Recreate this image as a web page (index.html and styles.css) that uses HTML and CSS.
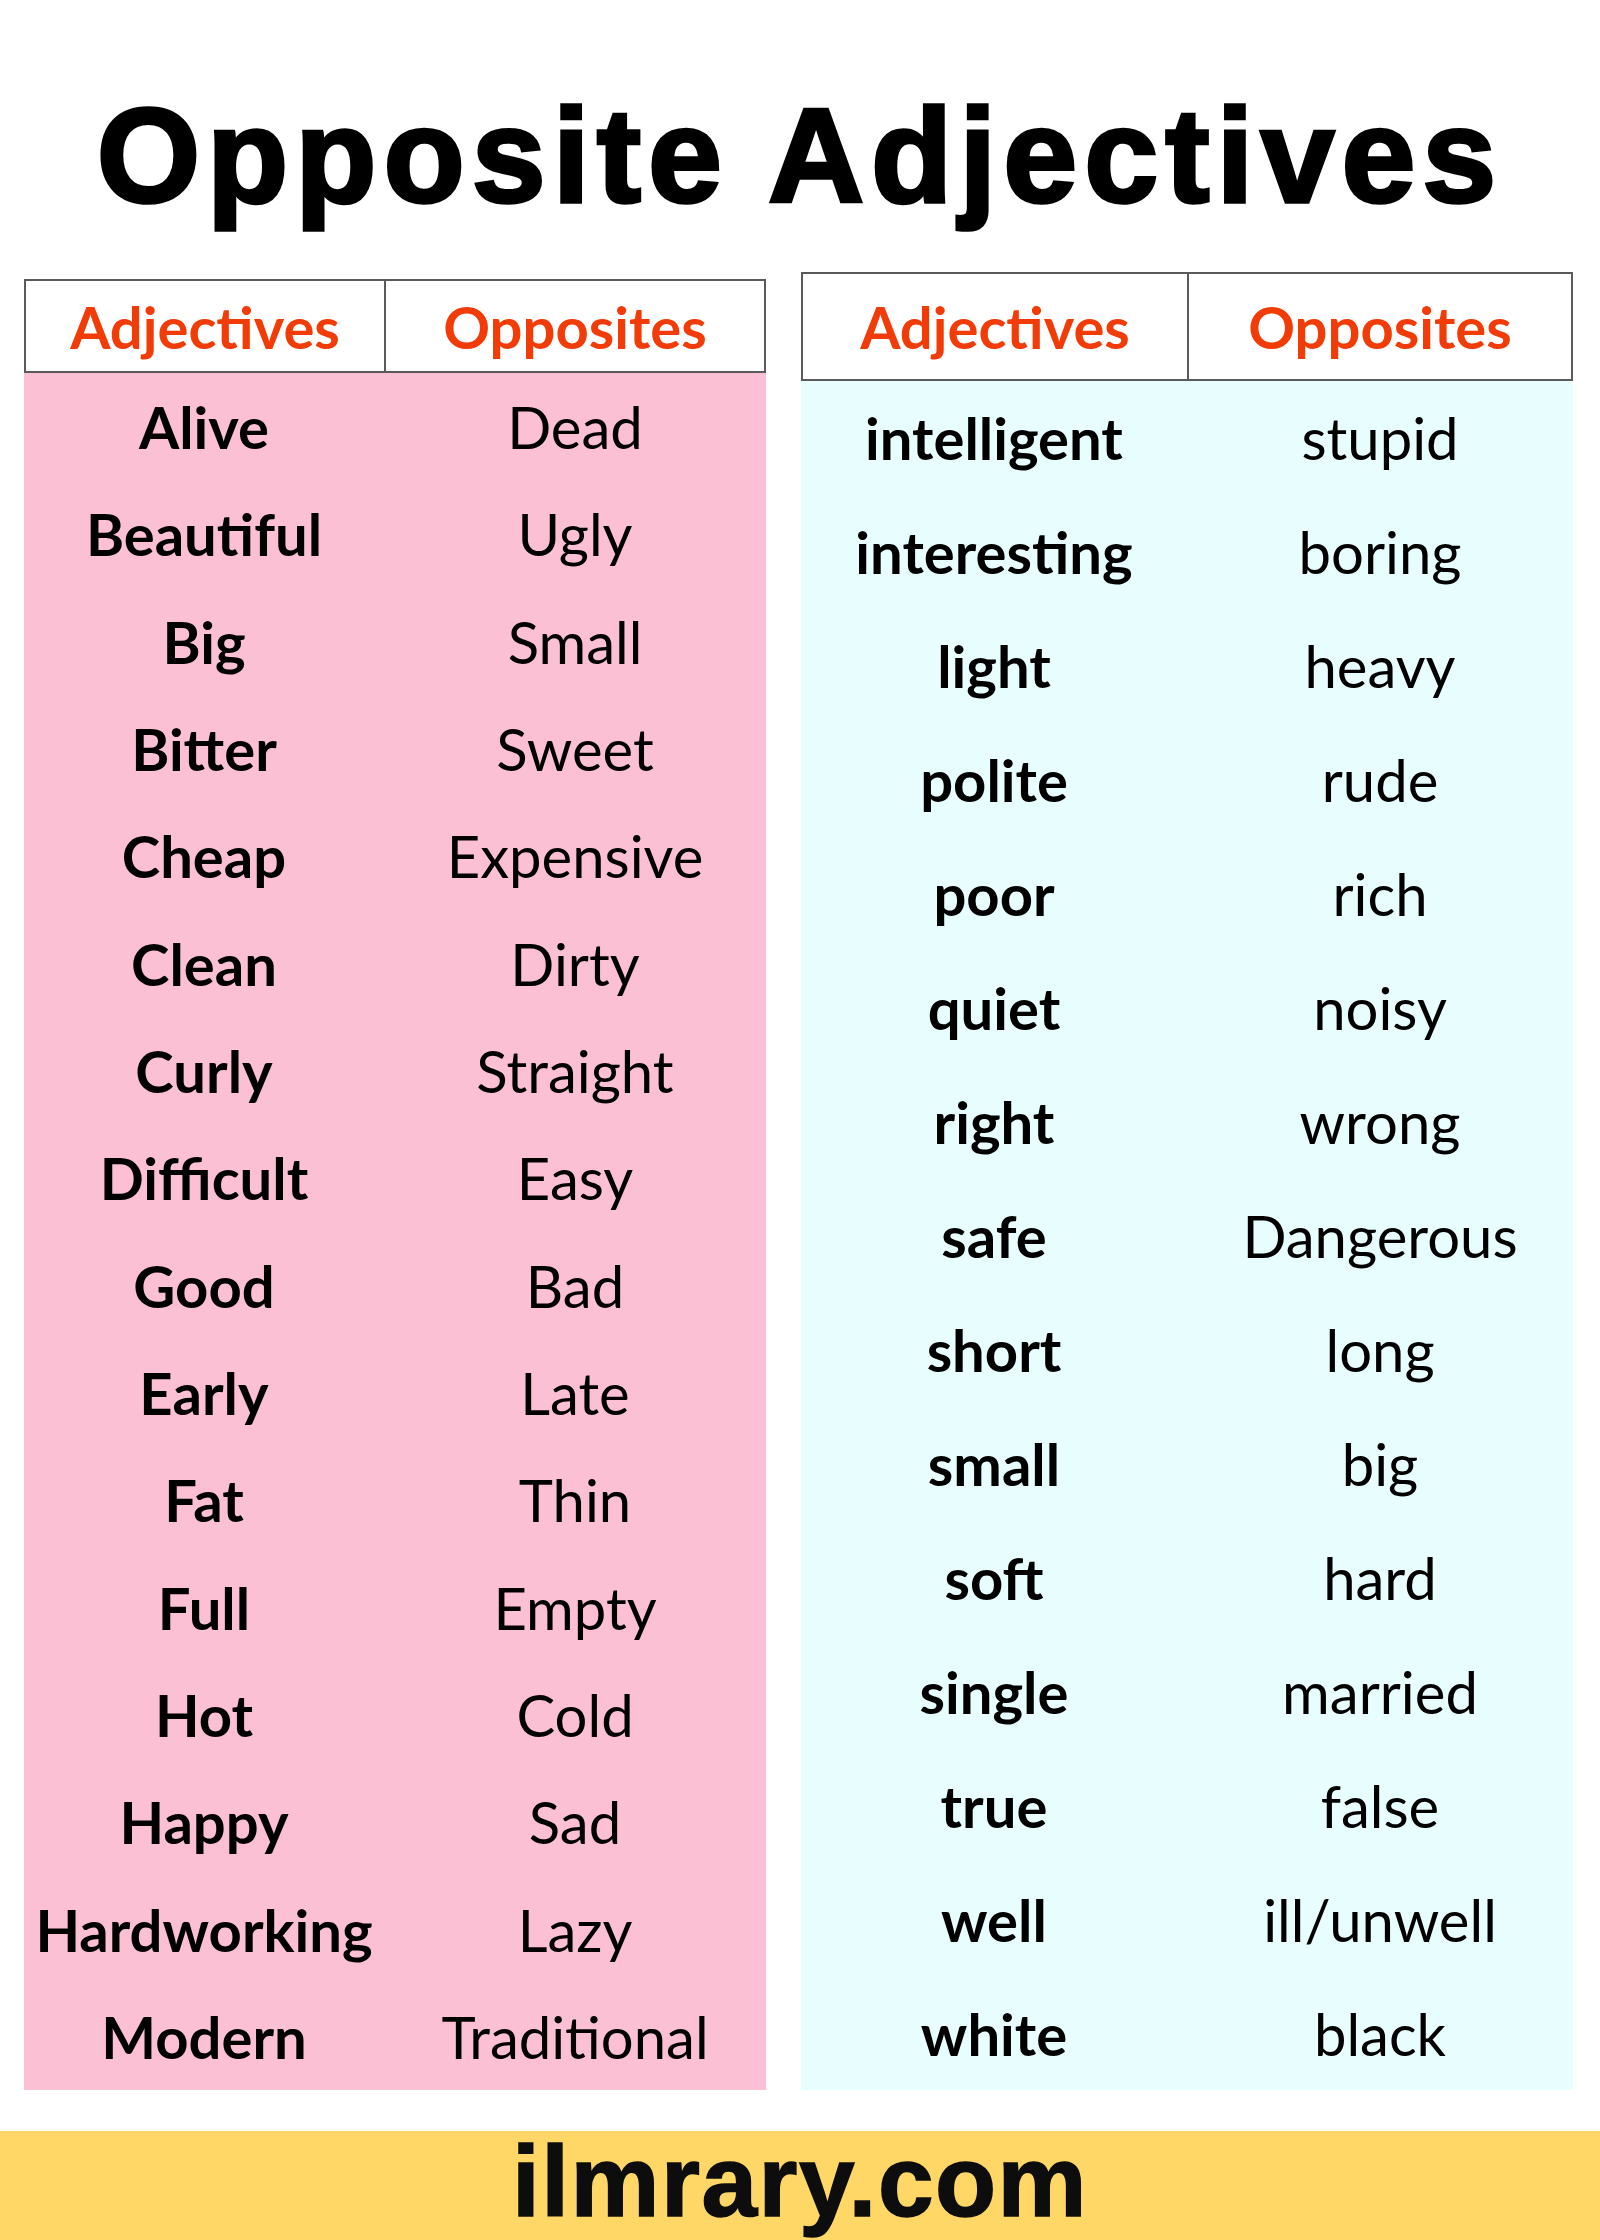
FILE: index.html
```html
<!DOCTYPE html>
<html lang="en">
<head>
<meta charset="utf-8">
<title>Opposite Adjectives</title>
<link rel="stylesheet" href="styles.css">
</head>
<body>
<div class="page">
  <h1 class="title">Opposite Adjectives</h1>
  <div class="tables">
    <div class="table table-left">
      <div class="head">
        <div class="hcell">Adjectives</div>
        <div class="hcell hcell-div">Opposites</div>
      </div>
      <div class="body body-pink">
        <div class="row"><span class="adj">Alive</span><span class="opp">Dead</span></div>
        <div class="row"><span class="adj">Beautiful</span><span class="opp">Ugly</span></div>
        <div class="row"><span class="adj">Big</span><span class="opp">Small</span></div>
        <div class="row"><span class="adj">Bitter</span><span class="opp">Sweet</span></div>
        <div class="row"><span class="adj">Cheap</span><span class="opp">Expensive</span></div>
        <div class="row"><span class="adj">Clean</span><span class="opp">Dirty</span></div>
        <div class="row"><span class="adj">Curly</span><span class="opp">Straight</span></div>
        <div class="row"><span class="adj">Difficult</span><span class="opp">Easy</span></div>
        <div class="row"><span class="adj">Good</span><span class="opp">Bad</span></div>
        <div class="row"><span class="adj">Early</span><span class="opp">Late</span></div>
        <div class="row"><span class="adj">Fat</span><span class="opp">Thin</span></div>
        <div class="row"><span class="adj">Full</span><span class="opp">Empty</span></div>
        <div class="row"><span class="adj">Hot</span><span class="opp">Cold</span></div>
        <div class="row"><span class="adj">Happy</span><span class="opp">Sad</span></div>
        <div class="row"><span class="adj">Hardworking</span><span class="opp">Lazy</span></div>
        <div class="row"><span class="adj">Modern</span><span class="opp">Traditional</span></div>
      </div>
    </div>
    <div class="table table-right">
      <div class="head">
        <div class="hcell">Adjectives</div>
        <div class="hcell hcell-div">Opposites</div>
      </div>
      <div class="body body-cyan">
        <div class="row"><span class="adj">intelligent</span><span class="opp">stupid</span></div>
        <div class="row"><span class="adj">interesting</span><span class="opp">boring</span></div>
        <div class="row"><span class="adj">light</span><span class="opp">heavy</span></div>
        <div class="row"><span class="adj">polite</span><span class="opp">rude</span></div>
        <div class="row"><span class="adj">poor</span><span class="opp">rich</span></div>
        <div class="row"><span class="adj">quiet</span><span class="opp">noisy</span></div>
        <div class="row"><span class="adj">right</span><span class="opp">wrong</span></div>
        <div class="row"><span class="adj">safe</span><span class="opp">Dangerous</span></div>
        <div class="row"><span class="adj">short</span><span class="opp">long</span></div>
        <div class="row"><span class="adj">small</span><span class="opp">big</span></div>
        <div class="row"><span class="adj">soft</span><span class="opp">hard</span></div>
        <div class="row"><span class="adj">single</span><span class="opp">married</span></div>
        <div class="row"><span class="adj">true</span><span class="opp">false</span></div>
        <div class="row"><span class="adj">well</span><span class="opp">ill/unwell</span></div>
        <div class="row"><span class="adj">white</span><span class="opp">black</span></div>
      </div>
    </div>
  </div>
  <div class="footer">ilmrary.com</div>
</div>
</body>
</html>
```

FILE: styles.css
```css
html, body {
  margin: 0;
  padding: 0;
  background: #ffffff;
}
body {
  width: 1600px;
  height: 2240px;
  overflow: hidden;
}
.page {
  display: flex;
  flex-direction: column;
  height: 2240px;
}
.title {
  margin: 0;
  padding: 90px 0 49px;
  height: 133px;
  font-family: "Liberation Sans", Arial, sans-serif;
  font-weight: 700;
  font-size: 133px;
  line-height: 133px;
  letter-spacing: 7px;
  text-align: center;
  color: #000;
  -webkit-text-stroke: 3.5px #000;
  white-space: nowrap;
}
.tables {
  display: flex;
  padding-left: 24px;
  gap: 35px;
  height: 1818px;
}
.table {
  display: flex;
  flex-direction: column;
}
.table-left {
  width: 742px;
  margin-top: 7px;
}
.table-right {
  width: 772px;
}
.head {
  display: grid;
  border: 2px solid #5a5a5a;
  background: #fff;
  box-sizing: border-box;
}
.table-left .head {
  grid-template-columns: 358px 1fr;
  height: 94px;
}
.table-right .head {
  grid-template-columns: 384px 1fr;
  height: 109px;
}
.hcell {
  display: flex;
  align-items: center;
  justify-content: center;
  font-family: Lato, "Open Sans", sans-serif;
  font-weight: 700;
  font-size: 58px;
  color: #f23c08;
}
.hcell-div {
  border-left: 2px solid #5a5a5a;
}
.body {
  flex: 1;
  display: flex;
  flex-direction: column;
}
.body-pink {
  background: #fcc0d5;
}
.body-cyan {
  background: #e8fdfd;
}
.row {
  flex: 1;
  display: grid;
  align-items: center;
  font-family: Lato, "Open Sans", sans-serif;
  font-size: 58px;
  color: #000;
}
.table-left .row {
  grid-template-columns: 360px 1fr;
}
.table-right .row {
  grid-template-columns: 386px 1fr;
}
.adj {
  font-weight: 700;
  text-align: center;
}
.opp {
  font-weight: 400;
  text-align: center;
}
.footer {
  margin-top: 41px;
  height: 109px;
  box-sizing: border-box;
  background: #fed766;
  font-family: "Liberation Sans", Arial, sans-serif;
  font-weight: 700;
  font-size: 100px;
  line-height: 100px;
  letter-spacing: 1.5px;
  text-align: center;
  color: #0d0d0d;
  -webkit-text-stroke: 1.5px #0d0d0d;
}
```
